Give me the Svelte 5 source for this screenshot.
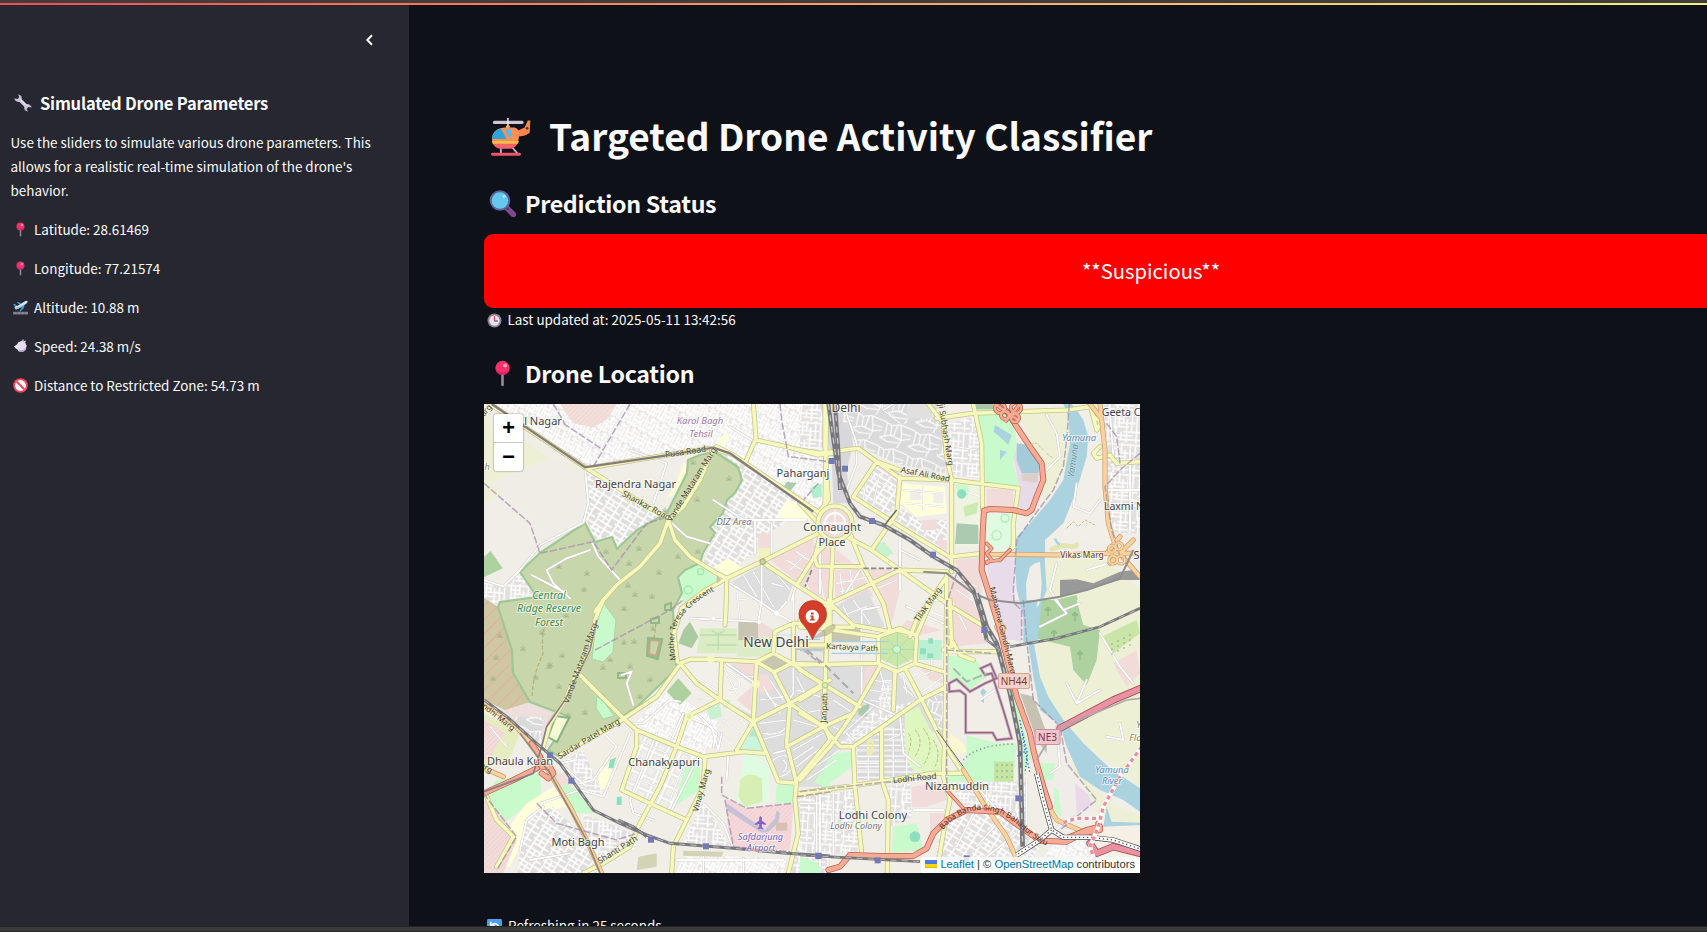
<script>
  const readings = [
    ['pin', 'Latitude: 28.61469'],
    ['pin', 'Longitude: 77.21574'],
    ['plane', 'Altitude: 10.88 m'],
    ['dash', 'Speed: 24.38 m/s'],
    ['ban', 'Distance to Restricted Zone: 54.73 m']
  ];

  // The map is drawn in sheets, each with its own origin and three units to a pixel.
  const sheets = {
    a: 'translate(470 340) scale(.33333)',
    b: 'translate(800 390) scale(.33333)',
    c: 'translate(470 600) scale(.33333)',
    d: 'translate(800 600) scale(.33333)',
    e: 'translate(640 520) scale(.33333)'
  };

  const areas = [
    ['a', 'url(#st1)', 'M42 192H1080V520L900 440 800 360 730 320 360 385 60 192Z'],
    ['a', '#f2dfdb', 'M270 192H440L410 240 370 262 310 250Z'],
    ['a', 'url(#hatch)', 'M270 192H440L410 240 370 262 310 250Z'],
    ['a', '#eef0d5', 'M42 200L75 300 150 310 210 350 130 395 160 430 42 490Z'],
    ['a', '#eef0d5', 'M160 300L230 350 340 385 345 400 250 355 130 400Z'],
    ['a', '#f0ede7', 'M130 400L250 350 350 400 350 540 215 610 180 530 60 430Z'],
    ['a', '#aed1a0', 'M42 650L62 633 98 685 42 712Z'],
    ['a', 'url(#st2)', 'M42 720L100 740 150 700 190 760 90 800 42 810Z'],
    ['a', 'url(#st3)', 'M345 395L430 440 540 510 590 520 500 570 440 628 425 590 375 600 350 540Z'],
    ['a', '#f2efe9', 'M610 460L640 340 690 340 650 400 600 470 570 465Z'],
    ['a', '#fffcd8', 'M615 440L640 370 660 370 625 465 590 470Z'],
    ['a', 'url(#st3)', 'M730 320L820 375 1030 515 960 540 860 600 850 640 770 700 700 670 735 580 720 560 770 480 815 420 805 380Z'],
    ['a', '#ffffe0', 'M745 300L770 275 780 300 760 320ZM955 475L1040 525 1030 545 920 535Z'],
    ['a', '#aacbb0', 'M950 425L980 430 955 460 935 450Z'],
    ['a', '#aef0cd', 'M1020 445L1055 430 1055 470 1030 475Z'],

    ['b', 'url(#st2)', 'M0 42H100V180H0Z'],
    ['b', '#d9d6dc', 'M60 42H130L160 160 140 240 150 340 100 340 95 200Z'],
    ['b', 'url(#st4)', 'M100 42H410L440 150 440 250 300 225 200 180 170 165Z'],
    ['b', '#f1dcda', 'M175 180L215 200 300 250 285 330 180 320 230 230Z'],
    ['b', 'url(#st3)', 'M170 320L230 230 290 270 285 360 250 370Z'],
    ['b', '#e2e0de', 'M340 42H385L400 85H320V55Z'],
    ['b', 'url(#st2)', 'M445 100L520 80 545 170 545 265 460 255Z'],
    ['b', '#ffffdc', 'M300 280L435 290 440 370 350 380 300 340Z'],
    ['b', '#f0ede8', 'M330 300L360 295 365 330 330 330ZM400 310H430V340H400Z'],
    ['b', 'url(#st3)', 'M290 340L360 390 440 390V480L290 390Z'],
    ['b', '#f1dcda', 'M365 390L410 388 410 420 365 420ZM410 450H440V490L420 480Z'],
    ['b', '#eef3e2', 'M465 280H545V470H465Z'],
    ['b', '#c8facc', 'M465 285L500 280 510 310 480 325Z'],
    ['b', '#cdebb0', 'M490 350L535 335 530 370 495 380Z'],
    ['b', '#aacbb0', 'M470 400L535 405V462H465Z'],
    ['b', '#c8facc', 'M525 42H600L640 100 650 150 640 220 660 290 555 280 550 150Z'],
    ['b', '#aac4a5', 'M525 42H580V58H530Z'],
    ['b', '#f1dcda', 'M560 295L640 300V350H560Z'],
    ['b', '#e8dbe8', 'M655 160L640 200 660 300 645 350 695 360 720 290V250Z'],
    ['b', '#a5cbd9', 'M650 160L690 165 720 210 715 250 665 250 650 210Z'],
    ['b', '#dccfc8', 'M668 250L715 250 712 278 665 272Z'],
    ['b', '#dffce2', 'M560 375L650 370V430L620 480 560 470Z'],
    ['b', '#eef0d5', 'M650 70H800L805 130 800 230 760 290 730 340 740 250 700 160Z'],
    ['b', '#e9dcea', 'M560 510L640 500 645 640 665 660V750H620L570 620Z'],
    ['b', '#f1dcda', 'M465 510L540 500 545 600 545 650 480 570ZM450 560L500 600 545 690V750H450Z'],
    ['b', '#f2efe9', 'M850 200H900L910 290 930 460 800 455 740 470 760 420 830 310Z'],
    ['b', 'url(#st2)', 'M910 42H1020V430L945 430 912 300Z'],
    ['b', '#eef0d5', 'M740 505H920L1020 600V900H715L730 640Z'],
    ['b', '#aed1a0', 'M725 640L830 615 850 700 780 720 710 750Z'],
    ['b', '#999', 'M780 570L830 568 880 580 960 545 1000 540 1020 570 960 570 860 600 780 620Z'],

    ['c', '#ddd', 'M770 195H1080V560H985L925 540 890 460 850 365 760 300Z'],
    ['c', '#aacba0', 'M650 60L685 105 665 150 625 170 615 130Z'],
    ['c', '#e5ecc0', 'M42 340L150 400 130 450 110 490 42 500Z'],
    ['c', '#f1dcda', 'M42 360L105 400 60 470 42 480Z'],
    ['c', 'url(#hatch)', 'M42 360L105 400 60 470 42 480Z'],
    ['c', '#eddfdb', 'M90 330L180 305 270 335 225 430 170 410Z'],
    ['c', 'url(#st4)', 'M130 350L220 350 215 430 160 400Z'],
    ['c', '#c8facc', 'M45 590L80 540 210 520 215 580 140 640 90 680Z'],
    ['c', '#ffffdc', 'M110 690L170 610 250 560 300 620 180 640 150 740 120 800H70Z'],
    ['c', '#f1dcda', 'M42 600L100 650 140 720 100 819H42Z'],
    ['c', 'url(#hatch)', 'M42 600L100 650 140 720 100 819H42Z'],
    ['c', '#f1dcda', 'M235 520L290 520 310 580 270 580Z'],
    ['c', 'url(#st3)', 'M170 650L250 620 330 700 390 819H140Z'],
    ['c', 'url(#st2)', 'M340 640L490 700 500 740 400 790 350 720Z'],
    ['c', '#c8facc', 'M280 550L320 570 370 640 320 640 270 580Z'],
    ['c', 'url(#st1)', 'M490 375L590 270 740 360 740 430 700 465 620 440Z'],
    ['c', 'url(#grid)', 'M510 400L610 445 540 600 465 570 500 440Z'],
    ['c', 'url(#grid)', 'M630 450L700 480 640 500 600 640 550 600Z'],
    ['c', '#c8facc', 'M645 500H690V570L610 620Z'],
    ['c', '#aed1a0', 'M590 275L625 235 665 280 630 315Z'],
    ['c', '#f3eee4', 'M280 480L440 390 490 390 440 580 330 560Z'],
    ['c', '#ffffdc', 'M385 520L430 480 420 560 390 570Z'],
    ['c', '#8edfc0', 'M420 480L438 472 430 505 415 505ZM440 590H455V615H440Z'],
    ['c', 'url(#st2)', 'M285 480L340 450 400 590 350 580Z'],
    ['c', 'url(#st2)', 'M700 600L780 740 640 730Z'],
    ['c', '#f5d8dc', 'M765 595L830 625 970 610 960 750 780 740Z'],
    ['c', 'url(#hatch)', 'M765 595L830 625 970 610 960 750 780 740Z'],
    ['c', '#c7c1d6', 'M770 610L800 630 885 690 915 655 920 630 930 640 925 670 890 700 870 695 770 630Z'],
    ['c', '#d9c0b4', 'M918 668H952V692H918Z'],
    ['c', '#c8facc', 'M1040 550L1080 500V570Z'],
    ['c', 'url(#st1)', 'M640 765L950 775 940 819H620Z'],
    ['c', '#d3d3b5', 'M640 752L760 755 755 770 640 768Z'],
    ['c', 'url(#st2)', 'M985 590H1080V819H965Z'],
    ['c', '#d3d3b5', 'M505 770L560 760 560 800 500 810Z'],

    ['d', '#ddd', 'M0 190H235L290 215 430 400 250 380 120 440 0 560Z'],
    ['d', '#bdf0d2', 'M355 120H425V180H355Z'],
    ['d', '#c8facc', 'M445 165L530 180 560 230 510 270 450 240Z'],
    ['d', 'url(#st2)', 'M250 240H275V320L350 300 300 350 170 430 120 430 230 320Z'],
    ['d', 'url(#st4)', 'M370 290L440 270V400L420 400Z'],
    ['d', '#def6c0', 'M315 340L355 320 440 480 420 525 340 510 315 480Z'],
    ['d', 'url(#st5)', 'M170 440L240 400 310 370 320 480 350 525 250 540H170Z'],
    ['d', '#c8facc', 'M40 550L100 460 155 455V500L90 550Z'],
    ['d', '#f1dcda', 'M448 10L520 40 560 130 455 140ZM335 560L430 545 440 600 380 620 335 620Z'],
    ['d', '#c8facc', 'M500 405L590 430 650 430 640 545H430L500 480Z'],
    ['d', '#fbf7d0', 'M450 400L490 430 500 460 450 460Z'],
    ['d', '#c5e5a5', 'M582 485H640V545H582Z'],
    ['d', 'url(#st2)', 'M445 550L680 545V700L600 635 500 625Z'],
    ['d', 'url(#st2)', 'M0 590L170 570 190 760H0Z'],
    ['d', 'url(#st2)', 'M250 560L330 550 335 650 270 680Z'],
    ['d', '#c8facc', 'M280 680L350 670 370 750 275 760ZM0 770L60 790V819H0Z'],
    ['d', '#f1dcda', 'M390 640L440 640 390 700Z'],
    ['d', 'url(#st3)', 'M420 690L500 640 600 645 720 740 660 819H400Z'],
    ['d', '#c8facc', 'M622 270L645 290 700 490 670 510 640 350Z'],
    ['d', '#c5c2b2', 'M660 280L700 290 740 400 740 460 710 420Z'],
    ['d', '#e9dcea', 'M620 0H665V130L625 110Z'],
    ['d', '#f0ede9', 'M680 480L770 480 880 600 890 620 780 690 740 620Z'],
    ['d', '#c8facc', 'M720 490L765 490 760 540 730 540ZM760 560L775 570 785 650 765 640Z'],
    ['d', '#ead9ea', 'M825 550L890 605 830 640Z'],
    ['d', '#eef0d5', 'M690 0H1020V560L890 460 800 390 730 260Z'],
    ['d', '#eef0d5', 'M780 430L840 520 920 600 1020 650V680L900 650Z'],
    ['d', '#aed1a0', 'M720 0H830L850 75 900 90 890 180 860 255 820 210 810 140 705 115Z'],
    ['d', '#c9e5a8', 'M905 110L1010 60 1020 100 940 160Z'],
    ['d', '#f1dcda', 'M940 190L1010 150 1020 220 980 260Z'],
    ['d', 'url(#st1)', 'M770 720L850 720 880 819H700Z'],
    ['d', '#f5efe5', 'M890 640L1020 690V819H880Z'],

    // central avenues and gardens
    ['e', '#f1eee8', 'M125 200L265 175 470 190 530 220 560 320 700 330 720 420 660 440 350 430 110 415 105 290Z'],
    ['e', '#c8facc', 'M120 160L160 120 185 130 240 185 130 250Z'],
    ['e', '#ffffd8', 'M225 140L265 115 315 150 262 172Z'],
    ['e', '#f1dcda', 'M355 40H395V85H355Z'],
    ['e', '#f2f2bf', 'M355 85H395V120L355 125Z'],
    ['e', '#dedede', 'M275 185L365 135 460 190 440 245 410 280 360 245Z'],
    ['e', '#f1dcda', 'M390 120L520 55 530 130 470 185ZM480 190L530 60 570 80 575 240 520 220ZM585 150L660 145 700 230 585 245ZM590 90L640 130 585 130ZM665 145L775 150 700 190ZM700 195L775 160 780 210 750 330Z'],
    ['e', '#ddd', 'M575 265L680 210 735 320 680 325Z'],
    ['e', '#ddd', 'M690 210L775 160 665 225Z'],
    ['e', '#c8f2cf', 'M700 70L735 65 760 100 725 120 700 90Z'],
    ['e', '#aacba0', 'M150 305L175 350 155 385 115 370 130 330Z'],
    ['e', '#d9ecc4', 'M180 325H290V400H170Z'],
    ['e', '#dcecc8', 'M290 350L400 350V410H290Z'],
    ['e', '#c8c5b3', 'M295 305H355V360H295Z'],
    ['e', '#eedcda', 'M355 300L400 330 400 350H355Z'],
    ['e', '#c8c5b3', 'M575 325H660V365H575ZM365 428L402 405 440 430 402 452Z'],
    ['e', '#c8c5b3', 'M460 385H555V430H465Z'],
    ['e', '#e8e6e0', 'M470 390H550V425H470Z'],
    ['e', '#cbe8a9', 'M718 355L770 332 825 362 822 415 770 440 718 415Z'],
    ['e', '#f1dcda', 'M675 445L725 430 700 490 665 530ZM800 300L905 330 825 350 780 325ZM840 440L910 460V490L870 480Z'],
    ['e', '#f3efe9', 'M120 430L235 430V540L150 490ZM250 430L345 500V590L250 540Z'],
    ['e', '#f1dcda', 'M270 430H345V480ZM290 540L335 500V575ZM350 460L385 465 400 510 355 520Z'],
    ['e', '#b0e8cc', 'M340 625L355 650H325Z'],
    ['e', '#c8f5dc', 'M325 650H355L370 690H300Z'],
    ['e', '#dffce2', 'M315 705L370 700 390 740 385 845 310 865 288 835Z'],
    ['e', '#d7efb4', 'M300 780Q330 750 365 775L368 845 315 860 295 830Z'],
    ['e', '#c8facc', 'M410 795H465V850H405Z'],
    ['e', '#aacbb0', 'M655 565L690 550 680 590 655 585Z'],
    ['e', '#c8f2cf', 'M200 560L240 550 245 590 210 600ZM250 540h20v25h-20z']
  ];

  const water = [
    ['b', 'M790 42L805 80 810 160 790 270 750 330 690 400 650 440 645 530 650 600 670 680V760H712L725 640 740 600 735 520V450L790 400 830 300 860 200 865 140 850 90 830 60 815 42ZM705 520L720 515 725 580 720 640 700 665 680 640 678 580 690 530Z'],
    ['d', 'M670 0L680 100 700 230 720 330 780 375 800 440 840 530 900 570 970 600 1020 635V565L930 505 850 430 790 360 745 290 720 230 700 120 712 0Z'],
    ['d', 'M920 620L910 680 1020 675V668L935 665Z'],
    ['b', 'M585 105L610 120 635 135 625 165 600 140 580 125ZM600 180L620 185 600 210Z'],
    ['d', 'M540 275l10-10 10 12-12 12zM540 300l12-5 0 15z']
  ];

  // kind: y secondary, o primary, t trunk, m motorway, w minor, f lane
  const roads = [
    ['f', 'e', 'M290 210L300 300M310 165L350 230M340 155L400 260M400 150L450 210M395 190L430 200M290 240L345 235M440 120L500 160M470 95L520 130M450 150L500 100M500 190L515 230M540 160L550 230M600 160L610 230M630 150L640 220M590 190L690 170M600 215L690 200M700 210L770 180M610 260L640 320M640 240L690 310M600 290L680 260M250 440L290 520M270 460Q330 500 270 510M300 470L340 470M360 540L430 530M370 500L420 580M390 480L430 540M380 520Q400 560 430 560M470 470L500 530M480 460L530 480M470 510L540 530M480 560L530 600M490 580L540 570M460 600L530 620M360 610L440 600M370 640Q420 650 440 620M360 660L440 640M250 600L300 640M240 640L290 690M300 600L330 620M460 690L550 640M460 720L520 680M400 720Q440 690 460 730 450 770 410 770 390 750 400 720M430 720Q450 740 430 755M480 770L600 690M500 780L590 720M470 740L560 670M580 540L640 580M590 520L660 560M580 620L620 640M600 600L650 600M640 660H720M650 690H720M650 710H720M650 730H720M650 750H720M740 660L790 640M740 690H790M740 720H790M610 640L700 560M620 660L720 600M820 480L900 440M840 520L910 470M870 500L890 540M720 450L750 570M700 480L750 490M690 510L750 520M690 540L750 550M790 500L820 530M790 470L800 520M860 240L880 280M850 270L910 290'],
    ['f', 'b', 'M240 20L250 60 300 100M180 240L260 290M200 260L190 330M240 250L220 340M310 300L430 310M320 340L430 350M370 290L370 360M460 560L530 590M470 600L530 640M460 640L500 720M470 170L530 180M480 300L540 320'],
    ['f', 'c', 'M60 380L110 440M640 230L700 260M660 220L740 270M690 300L740 320M520 430L590 460M500 480L570 510M490 530L560 560M650 470L600 600M860 470L900 500'],
    ['w', 'a', 'M345 385L355 490 340 548 210 615 150 690 100 740 42 720M365 605L385 650 450 720M360 630L290 655 230 690 250 730 300 775M185 705L290 760M600 545L650 590 720 610M855 540V640M820 540H1010M905 550V640M780 260L860 310M480 330L590 370 550 490M730 480L830 545'],
    ['w', 'e', 'M365 135V245L355 305 150 295M270 190L360 245 410 280 455 305M440 245L410 280M460 230V430M455 240L470 190M260 430L345 490M460 440V520L440 550M665 270V540L780 590 790 700 840 740M665 270L720 260M540 90V220M640 660L620 640M440 690L400 700M140 590L215 620 235 690 245 640M265 700L260 780M780 20V150M860 240L910 240'],
    ['w', 'b', 'M130 42L170 160M170 160V220L140 300M250 60L280 42M300 480V600M180 540L130 620M300 480L360 510M930 70L940 200M830 280L820 350 870 370 900 330M770 520L750 600 790 660M790 660L840 640M320 650L430 700M860 540L960 510M740 75L770 130 780 200 740 240M915 210H1020M920 300H1020M990 180V420'],
    ['w', 'c', 'M490 315L470 250 485 215 455 225M630 305L600 300 520 370 480 370M690 350L740 400 730 440M550 660L490 640 480 600 560 400M600 640L690 460M640 340L600 430M400 400L440 440 370 540 330 550M210 610L330 570 400 590 480 400M150 750L170 660 220 620M350 560L270 490 320 480M180 780L300 760M700 610L760 670 790 745M1050 600V800M620 780H940M700 770V819M820 775V819'],
    ['w', 'd', 'M395 180V215H435M0 610H60V560M100 560V770M50 590V760M340 630H430M450 560L540 570 600 640M680 540V700M560 560V620M600 660L530 740M520 640L470 740M650 700L560 770M900 100L960 200 1000 250M765 0L800 40 720 80M830 310L900 270M920 410L970 420 960 370M770 380L780 500 750 520M840 640L720 720M860 240L830 310 800 250M600 260L540 300'],

    ['y', 'a', 'M60 192L350 385 430 435 540 505 595 535M350 385L590 345 720 325 780 340M725 335L690 420 640 500 595 540M595 540L570 610 510 680 440 735 400 780 375 815M595 540L615 600 660 650 740 700 770 715M770 715L875 665 1045 580 1090 550M770 715L768 810 765 855M875 665L980 735 1090 805M980 735L1040 640 1080 600M850 192L858 295 825 370M858 300L950 320 1045 345 1090 340M1065 192V320L1075 480 1045 520M740 320L790 345 1050 520'],
    ['y', 'b', 'M520 42L545 160 548 360M410 85L520 70 800 60 870 50M0 180L60 190 175 175 230 215 300 240M175 175L300 265 455 270 655 295M385 42L430 100 440 200 455 270V500M655 295L640 400V470L600 510M455 500L550 490M300 260L290 370 215 480M230 215L160 320M160 320L300 410 455 505V545M80 42L75 340M140 440L215 480 300 540 440 545M150 430L190 530 250 640 270 720M100 450L90 640V760M0 690L90 640M42 500L52 528 190 530M300 540L90 640M300 540L440 640M440 560L350 690 330 740M90 640L160 705 270 725M270 725L300 715 345 735M0 710L160 712M55 400L0 340M870 42L880 80 905 95 890 120 880 80M900 170L880 190 890 205 930 195 950 220 1020 215M440 545V760M60 440L45 500'],
    ['y', 'c', 'M400 0L375 60 360 150 320 220 285 300 240 370 220 440M330 225L460 355 500 390 620 440 700 470 820 455 885 460M270 465L440 370 560 290 625 200M630 190L680 250 750 300 850 365M630 190L660 178 720 178 860 185 910 160 965 190 1080 195M755 185L750 300 650 350 620 440 570 560 510 670 480 740 400 790 340 819M500 390V440L455 570 540 610 650 660M705 470L700 560 650 660 610 740 605 819M860 185L850 365 890 460 925 545 980 550M850 365L960 310 1080 240M860 185L910 215 960 310 1060 380M850 365L800 450M965 190L915 215M965 190L1060 255M970 70V190M910 160L915 95 970 70 1080 75M960 310L950 430 980 550M950 440L1060 380M1065 380L1080 420 980 540 975 600 985 700 955 819M990 585L1080 570M50 590L80 660 130 710 80 800'],
    ['y', 'e', 'M260 175L190 215 125 265 102 340 112 425'],
    ['y', 'd', 'M0 80L60 85 235 110M0 135H75M0 195L235 190M345 190L430 215M350 105L395 0M235 110L290 90 350 105 345 190 290 215 235 190ZM0 300L75 255M75 255L85 0M75 255L180 320M0 210L75 255M90 440L160 340 240 200M0 340L70 380 120 440M70 380L160 340M120 440H160L240 385 360 300 440 260M285 210L280 330M315 205L365 300 430 430 490 520M75 255L70 380M90 440L0 540M160 440L165 560 185 760M245 385V540L265 600 262 819M440 -10L438 160 435 400 430 530 450 600 430 700 410 819M450 0L455 140 430 150 500 155 600 155M455 20L545 75M450 110L480 165 520 180M0 580L240 545 400 520 490 520'],
    ['o', 'b', 'M550 495L620 493 770 495 920 490H1020M900 42L915 180V290L925 400 950 480 1020 560M870 42L900 80M920 490L960 440M930 520L1000 450'],
    ['o', 'd', 'M490 510L550 610 620 710 660 800M740 610L770 660 860 700M590 80L600 70 612 85 600 100Z'],
    ['o', 'c', 'M42 310L130 370 200 450 240 520M240 520L300 620 350 720 395 819M42 505L100 530'],
    ['t', 'b', 'M600 42L625 70 650 110 690 170 725 220 730 270 710 320 695 360 680 370 640 360 570 357 552 362 548 430 545 540 570 620 600 720 615 780'],
    ['t', 'd', 'M612 140L625 190 650 290 690 400 700 450 710 490 730 560 750 620'],
    ['t', 'd', 'M85 810L120 800 150 765 240 768H340L380 745 400 700 440 660 500 630 600 635 660 680 720 722 800 725 850 700 900 690 895 670M800 715L860 690 900 680'],
    ['t', 'c', 'M42 580L130 540 200 505M185 430L210 470M215 500L240 500 250 520 235 535 215 520'],
    ['m', 'd', 'M1030 262L940 300 780 385M870 730L890 760 940 740 1020 760']
  ];
  const styles = {
    f: ['#cfcccb', 5, '#fff', 3.5],
    w: ['#c9c4c0', 8, '#fff', 5.5],
    y: ['#c3c68a', 15, '#f6f8bd', 10.5],
    o: ['#c79a66', 15, '#fad2a0', 11],
    t: ['#b8604c', 18, '#f7ab97', 13.5],
    m: ['#a8505e', 22, '#e892a2', 17]
  };

  const rails = [
    ['b', 'M85 42L100 150 115 250 150 340 180 380 250 405 330 450 400 500 470 540 520 600 545 680 560 750', 12],
    ['b', 'M105 42L115 180 120 300', 12],
    ['d', 'M530 -20L560 80 590 130 630 280 660 430 668 740', 14],
    ['d', 'M560 120L600 150M630 140L770 115 900 80 1020 25', 8],
    ['c', 'M42 300L110 350 200 430 270 490 320 560 370 630 450 670 530 705 600 730 790 745 950 760 1080 768', 9],
    ['c', 'M445 660L490 680 530 710', 8],
    ['d', 'M0 765L120 772 360 785', 8]
  ];

  const metro = [
    ['a', 'M65 192L345 382 590 346 730 323 780 340 830 375 1030 515', '#857b7e', 7],
    ['b', 'M370 545L440 550 520 610 570 630 660 640 780 620 860 600 960 565 1000 480', '#8f8f8f', 6],
    ['b', 'M250 410L290 360', '#666', 4],
    ['c', 'M380 60L360 150 285 300 230 380 215 440 190 520 42 575', '#8b7f86', 5],
    ['c', 'M150 400L240 520 350 720 390 819', '#93867a', 5],
    ['d', 'M1020 295L980 300 800 375 740 430 710 480', '#aaa', 5],
    ['d', 'M410 390L490 500', '#666', 3]
  ];

  const borders = [
    ['a', 'M480 192L440 260 370 380M280 250L400 330M42 430L180 550 210 640 370 605 425 690 530 550 595 530M930 192L935 240 955 350 1080 365M1045 430L1000 480M250 192L290 260'],
    ['b', 'M808 42L800 150 790 230 760 300 700 380 650 450 640 600 642 640 665 660V750M1020 190L960 240 915 290 935 420 960 500M470 550L440 640V750M920 100L950 140 960 220'],
    ['c', 'M375 150L600 30 640 0M200 610L260 670 440 720 500 700M755 530V585L830 625 970 610M765 600L790 740 960 755M980 590L1080 575M40 580L140 710 80 810'],
    ['d', 'M440 0V550M0 575L400 530M670 0L680 120 700 300 780 380 800 490 890 600 780 690M440 150L580 160M10 150L60 190']
  ];

  const stations = [[95,213,'b'],[135,236,'b'],[216,393,'b'],[399,494,'b'],[553,720,'b'],[543,719,'c'],[708,739,'c'],[1046,768,'c'],[240,466,'c'],[304,542,'c'],[55,767,'d'],[233,781,'d'],[655,595,'d'],[500,775,'d']];

  const tufts = [[693,464],[729,480],[697,501],[665,512],[727,509],[639,550],[629,565],[678,558],[698,553],[659,574],[559,568],[587,575],[606,553],[628,587],[635,596],[652,598],[584,591],[500,637],[523,650],[562,657],[550,666],[536,679],[559,688],[549,668],[493,680],[496,659],[610,661],[634,643],[630,668],[603,669],[640,698],[650,681],[603,698],[568,717],[585,714],[603,714],[624,644],[624,610],[566,617],[542,634],[653,630]];

  // text, x, y, size, rotation, colour, italic
  const labels = [
    ['l Nagar', 543, 425, 11, 0, '#444'],
    ['Karol Bagh', 700, 424, 9.5, 0, '#a07aa8', 1],
    ['Tehsil', 701, 437, 9.5, 0, '#a07aa8', 1],
    ['Rajendra Nagar', 635.500, 487.5, 11, 0, '#444'],
    ['Paharganj', 803, 476.5, 11, 0, '#444'],
    ['Delhi', 846, 412, 12, 0, '#444'],
    ['DIZ Area', 734, 525, 9.3, 0, '#777', 1],
    ['Connaught', 832, 531, 11, 0, '#444'],
    ['Place', 832, 545.5, 11, 0, '#444'],
    ['Central', 549, 598.5, 10.5, 0, '#3f8f4f', 1],
    ['Ridge Reserve', 549, 612, 10.500, 0, '#3f8f4f', 1],
    ['Forest', 549, 625.5, 10.500, 0, '#3f8f4f', 1],
    ['New Delhi', 776, 647, 13.700, 0, '#444'],
    ['Dhaula Kuan', 520, 765, 11, 0, '#444'],
    ['Chanakyapuri', 664, 766, 11, 0, '#444'],
    ['Moti Bagh', 578, 845.5, 11, 0, '#444'],
    ['Nizamuddin', 957, 789.5, 11.2, 0, '#444'],
    ['Lodhi Colony', 873, 819, 11.2, 0, '#444'],
    ['Lodhi Colony', 856, 829, 9, 0, '#777', 1],
    ['Safdarjung', 760.500, 839.5, 9.2, 0, '#7560b8', 1],
    ['Airport', 761, 850.5, 9.2, 0, '#7560b8', 1],
    ['Geeta C', 1121, 415.5, 10.500, 0, '#444'],
    ['Laxmi N', 1124, 509.5, 10.500, 0, '#444'],
    ['Sh', 1140, 559, 11, 0, '#444'],
    ['Yamuna', 1079, 440.5, 9.4, 0, '#5b8dc0', 1],
    ['Yamuna', 1076, 461, 9.2, -82, '#5b8dc0', 1],
    ['Yamuna', 1112, 773, 9.2, 0, '#5b8dc0', 1],
    ['River', 1112, 784, 9.2, 0, '#5b8dc0', 1],
    ['Ya', 1141, 728, 9.500, 0, '#8b8c52', 1],
    ['Floo', 1138, 741, 9.500, 0, '#8b8c52', 1],
    ['h', 487, 470, 9, 0, '#8b8c52', 1],
    ['Pusa Road', 686, 454.5, 8.4, -8, '#444'],
    ['Shankar Road', 645, 508, 8.2, 28, '#444'],
    ['Vande Mataram Marg', 694, 486, 8.4, -58, '#444'],
    ['Vande Mataram Marg', 583, 664, 8.3, -70, '#444'],
    ['Sardar Patel Marg', 590, 741, 8.400, -31, '#444'],
    ['Vinay Marg', 704, 791, 8.400, -74, '#444'],
    ['Shanti Path', 619, 852, 8.400, -32, '#444'],
    ['Janpath', 827, 708, 8.2, -87, '#444'],
    ['Kartavya Path', 852, 650, 8, 3, '#444'],
    ['Asaf Ali Road', 925, 477, 8.2, 11, '#444'],
    ['aji Subhash Marg', 943, 433, 8.2, 81, '#444'],
    ['Tilak Marg', 930, 606, 8.2, -54, '#444'],
    ['Vikas Marg', 1082, 558, 8.400, 0, '#553c20'],
    ['Mahatma Gandhi Marg', 1000, 631, 8.2, 76, '#553030'],
    ['Lodhi Road', 915, 781, 8.3, -6, '#444'],
    ['ndhi Marg', 497, 719, 8, 38, '#553c20'],
    ['arg', 488, 412, 8, -50, '#444'],
    ['arg', 485, 770, 8, 30, '#444']
  ];
</script>

{#snippet emoji(kind, size)}
  <svg class="emoji" width={size} height={size} viewBox="0 0 32 32" aria-hidden="true">
    {#if kind === 'pin'}
      <path d="M14.500 15h3v15q-1.500 2-3 0z" fill="#998ea4" />
      <circle cx="16" cy="9.500" r="8.500" fill="#f8316a" />
      <path d="M8 11a8.500 8.500 0 0 0 16 1q-8 6-16-1z" fill="#d3266c" />
      <circle cx="19" cy="6.500" r="2.500" fill="#ff9dba" />
    {:else if kind === 'wrench'}
      <path d="M8 8L24 24" stroke="#d9cfe4" stroke-width="6" />
      <path d="M.5 8a7.500 7.500 0 0 0 10 5.500A7.500 7.500 0 0 0 12.500 3L7 .5l2.500 5L6.500 9zM31.500 24a7.500 7.500 0 0 0-10-5.500A7.500 7.500 0 0 0 19.500 29l5.500 2.500-2.500-5 3-3.500z" fill="#cbbfd9" />
      <path d="M11 9l13 13" stroke="#eee6f4" stroke-width="1.500" />
    {:else if kind === 'plane'}
      <path d="M0 25h32v6H0z" fill="#777083" />
      <path d="M2 28h5m3 0h5m3 0h5m3 0h5" stroke="#b5afbd" stroke-width="1.300" />
      <path d="M8 5l5-1 9 7-5 2zM0 9l4-1 7 7-4 2zM20 12l5-3-2 9-7 6-3 1z" fill="#279fe0" />
      <path d="M3 15q12-5 20-11 6-4 8-2 1 3-3 6-12 9-21 12-3 0-4-5z" fill="#dfe7ef" />
      <path d="M4 17q12-3 24-10-9 10-22 13z" fill="#a9c0d2" />
    {:else if kind === 'dash'}
      <path d="M2 16l7-5q1-5 6-5 3-4 7-1 5 0 5 5 4 4 1 8 1 6-5 7-2 4-6 2-6 1-7-4-4-2-8-7z" fill="#e6deef" />
      <path d="M12 21q3 4 8 3 6-1 7-8 2 9-5 11-7 3-10-6z" fill="#b3a0cb" />
      <path d="M2 16h10M20 3l3-1m1 4l3-2" stroke="#eee7f5" stroke-width="2.500" />
    {:else if kind === 'ban'}
      <circle cx="16" cy="16" r="15.500" fill="#f8455c" />
      <circle cx="16" cy="16" r="11.500" fill="#fff" />
      <path d="M8 8l16 16" stroke="#f8455c" stroke-width="4" />
    {:else if kind === 'heli'}
      <path d="M20 12l7-3 2.500-5.500h2L31 13q-4 3-10 3z" fill="#ff8350" />
      <circle cx="29" cy="9.500" r="1" fill="#333" />
      <path d="M3.500 5h21.500" stroke="#cfc5d4" stroke-width="2.500" stroke-linecap="round" />
      <path d="M14 1.500v7" stroke="#eee5ee" stroke-width="1.200" />
      <path d="M12.500 7.500h3v2.500h-3z" fill="#f9b440" />
      <path d="M8.500 24v5M17 24l5 6" stroke="#bdaac6" stroke-width="1.500" />
      <path d="M1.500 17.500C2 12 6.500 9 12 9h7q4.500 1 3.500 8-.500 8-7 8H8.500q-7-1-7-7.500z" fill="#ff8f55" />
      <path d="M2 21h19.500q-2 4.500-6 4.500H8.500q-5-.500-6.500-4.500z" fill="#f4626b" />
      <path d="M1.500 19.500h21l-.700 2.200H2z" fill="#f9bd45" />
      <path d="M1.500 18q0-6.500 7-8.500l4.500 8.500z" fill="#2aa5dc" />
      <path d="M12 10.500h4.500v6.500h-1.500z" fill="#55b9e8" />
      <path d="M2 29.800h21" stroke="#f05468" stroke-width="2.300" stroke-linecap="round" />
    {:else if kind === 'lens'}
      <path d="M21 21l8 8" stroke="#81478f" stroke-width="6.500" stroke-linecap="round" />
      <path d="M18 18l5 5" stroke="#533566" stroke-width="3" />
      <circle cx="13" cy="12.500" r="11" fill="#65c9ed" stroke="#5a659e" stroke-width="2.300" />
      <circle cx="18" cy="7.500" r="2" fill="#ace9fb" />
    {:else if kind === 'clock'}
      <circle cx="16" cy="16" r="15" fill="#8a8190" />
      <circle cx="16" cy="16" r="11" fill="#e6e0ea" />
      <path d="M16 7v10" stroke="#dd3d69" stroke-width="2.500" />
      <path d="M16 17h7" stroke="#554b5d" stroke-width="2.500" />
    {:else if kind === 'refresh'}
      <rect x="0" y="0" width="32" height="32" rx="3" fill="#4d9cf0" />
      <path d="M8 6v9h9M9 14q7-8 14-1 3 9-7 12" fill="none" stroke="#fff" stroke-width="3.500" />
    {/if}
  </svg>
{/snippet}

<div class="screen">
  <div class="frame-top"></div>
  <div class="decoration"></div>
  <div class="body">
    <aside>
      <div class="collapse">
        <svg width="9" height="12" viewBox="0 0 9 12"><path d="M7 1.300L2.300 6 7 10.700" fill="none" stroke="#fafafa" stroke-width="2" /></svg>
      </div>
      <h3>{@render emoji('wrench', 18)}<span>Simulated Drone Parameters</span></h3>
      <p class="intro">Use the sliders to simulate various drone parameters. This<br />allows for a realistic real-time simulation of the drone's<br />behavior.</p>
      {#each readings as [kind, text]}
        <p class="reading">{@render emoji(kind, 15)}<span>{text}</span></p>
      {/each}
    </aside>

    <main>
      <h1>{@render emoji('heli', 41)}<span>Targeted Drone Activity Classifier</span></h1>
      <h2>{@render emoji('lens', 27)}<span>Prediction Status</span></h2>
      <div class="status">**Suspicious**</div>
      <p class="updated">{@render emoji('clock', 15)}<span>Last updated at: 2025-05-11 13:42:56</span></p>
      <h2 class="location">{@render emoji('pin', 27)}<span>Drone Location</span></h2>

      <div class="map">
        <svg class="tiles" width="656" height="469" viewBox="484 404 656 469">
          <defs>
            <pattern id="st1" width="54" height="36" patternUnits="userSpaceOnUse" patternTransform="rotate(-62)">
              <rect width="54" height="36" fill="#ebe9e7" />
              <path d="M0 5H54M0 14H30M12 22H54M0 31H40M6 0V36M22 5V31M34 0V22M46 14V36" stroke="#fff" stroke-width="5" fill="none" />
              <path d="M27 14v8M0 26h6M46 8h8" stroke="#d3d0d0" stroke-width="2" />
            </pattern>
            <pattern id="st2" width="86" height="90" patternUnits="userSpaceOnUse" patternTransform="rotate(4)">
              <rect width="86" height="90" fill="#e2e0df" />
              <path d="M0 6H86M0 19H28M10 31H66M0 43H46M30 57H86M0 68H60M14 80H86M4 0V50M16 6V43M29 0V31M40 19V90M55 0V57M70 6V90M8 43V90M24 57V80" stroke="#fff" stroke-width="4.500" fill="none" />
            </pattern>
            <pattern id="st3" width="60" height="44" patternUnits="userSpaceOnUse" patternTransform="rotate(32)">
              <rect width="60" height="44" fill="#dfdedd" />
              <path d="M0 5H60M0 18H38M12 32H60M8 0V44M25 5V32M42 0V44" stroke="#fff" stroke-width="5" fill="none" />
            </pattern>
            <pattern id="st4" width="90" height="76" patternUnits="userSpaceOnUse" patternTransform="rotate(18)">
              <rect width="90" height="76" fill="#dadada" />
              <path d="M0 10L25 16 50 6 90 10M25 16L30 45 0 60M30 45L65 50 90 38M50 6L60 30 65 50 60 76M0 60L28 66 60 60M42 8L40 46M10 12L14 54M60 30H90" stroke="#fff" stroke-width="3.500" fill="none" />
            </pattern>
            <pattern id="st5" width="75" height="16" patternUnits="userSpaceOnUse">
              <rect width="75" height="16" fill="#d9d8d8" />
              <path d="M0 4H75M20 0V16M55 0V16" stroke="#fff" stroke-width="3.500" fill="none" />
            </pattern>
            <pattern id="grid" width="38" height="38" patternUnits="userSpaceOnUse" patternTransform="rotate(24)">
              <rect width="38" height="38" fill="#e9e7e3" />
              <path d="M0 3H38M3 0V38" stroke="#fff" stroke-width="5" />
              <rect x="11" y="11" width="20" height="20" fill="#f1efea" />
            </pattern>
            <pattern id="hatch" width="10" height="10" patternUnits="userSpaceOnUse" patternTransform="rotate(45)">
              <path d="M0 0V10" stroke="#ee9a94" stroke-width="1.600" opacity=".6" />
            </pattern>
            <path id="seru" d="M943 830Q952 818 966 812.500T1000 813.500Q1012 819 1022 829L1040 843 1060 850" />
            <path id="crescent" d="M676 660Q671 638 678 622 688 606 710 593L730 583" />
          </defs>
          <rect x="484" y="404" width="656" height="469" fill="#f1eee8" />
          {#each areas as [sheet, fill, d]}
            <path transform={sheets[sheet]} {fill} {d} />
          {/each}
          {#each water as [sheet, d]}
            <path transform={sheets[sheet]} fill="#aad3df" fill-rule="evenodd" {d} />
          {/each}

          <path d="M484 598L497 606 512 650 513 673 530 702 505 710 484 700Z" fill="#cfc6a2" />
          <path d="M484 598L497 606 512 650 513 673 530 702 505 710 484 700Z" fill="url(#hatch)" />
          <path d="M585 523L595 542 612 537 617 549 637 530 667 513 687 473 688 460 700 455 713 452 720 455 738 467 742 480 735 493 727 500 723 513 710 527 715 533 703 553 700 563 685 570 678 577 682 593 673 610 675 660 677 668 637 707 560 757 548 750 570 717 530 702 513 673 512 650 498 607 500 602 537 597 520 572 540 553Z" fill="#c8d7ab" stroke="#9fc795" stroke-width="2.200" stroke-linejoin="round" />
          <g stroke="#9fae88" stroke-width=".8" fill="none">
            {#each tufts as [x, y]}
              <path d="M{x - 3} {y}h6M{x - 2.5} {y - 3}l2.500 3 2.500-3M{x} {y - 4.5}v4.500" />
            {/each}
          </g>
          <path d="M603 602L616 620 613 652 603 662 592 659 595 630ZM597 696L605 703 614 716 603 719 596 708Z" fill="#c8facc" stroke="#a5d8a5" />
          <path d="M556 716L569 718 557 742 548 737Z" fill="#f5f9d5" stroke="#84b580" stroke-width="2" />
          <path d="M649 639L661 640 657 658 648 655Z" fill="#c8d7ab" stroke="#92b985" stroke-width="4" />
          <path d="M650 640L660 641 656 656 649 654Z" fill="#c8d7ab" stroke="#c1a98a" stroke-width="2" />
          <path d="M618 673h8v5h-8zM665 605l6-2v7h-6zM651 619l8-2v6h-8z" fill="#c8d7ab" stroke="#92b985" stroke-width="2" />
          <path d="M546 622q-5 15-3 32-10 20-11 43M656 623l-2 16" fill="none" stroke="#b4a468" stroke-dasharray="4 2" />

          <g fill="none" stroke-linejoin="round" stroke-linecap="round">
            {#each ['f', 'w', 'y', 'o', 't', 'm'] as kind}
              {#each roads.filter((r) => r[0] === kind) as [, sheet, d]}
                <path transform={sheets[sheet]} {d} stroke={styles[kind][0]} stroke-width={styles[kind][1]} />
              {/each}
              {#each roads.filter((r) => r[0] === kind) as [, sheet, d]}
                <path transform={sheets[sheet]} {d} stroke={styles[kind][2]} stroke-width={styles[kind][3]} />
              {/each}
            {/each}
            <path transform={sheets.d} d="M440 570L490 625" stroke="#b8604c" stroke-width="11" />
            <path transform={sheets.d} d="M440 570L490 625" stroke="#f7ab97" stroke-width="7" />
            <path transform={sheets.b} d="M560 460L575 475 560 490 575 510 560 520M560 515L600 510 630 480" stroke="#b8604c" stroke-width="11" />
            <path transform={sheets.b} d="M560 460L575 475 560 490 575 510 560 520M560 515L600 510 630 480" stroke="#f7ab97" stroke-width="7" />
          </g>

          <g fill="none">
            {#each borders as [sheet, d]}
              <path transform={sheets[sheet]} {d} stroke="#a68daa" stroke-width="4.500" stroke-dasharray="22 6" opacity=".75" />
            {/each}
            {#each metro as [sheet, d, color, w]}
              <path transform={sheets[sheet]} {d} stroke={color} stroke-width={w} />
            {/each}
            {#each rails as [sheet, d, w]}
              <path transform={sheets[sheet]} {d} stroke="#77777a" stroke-width={w} />
              <path transform={sheets[sheet]} {d} stroke="#c9c9c9" stroke-width={w * 0.3} stroke-dasharray="18 16" />
            {/each}
            <circle cx="835" cy="523" r="17" fill="#eeddd8" stroke="#c3c68a" stroke-width="5" />
            <circle cx="835" cy="523" r="17" stroke="#f6f8bd" stroke-width="3.500" />
            <circle cx="835" cy="523" r="10" stroke="#fff" stroke-width="2" />
            <path d="M835 510v26M822 523h26" stroke="#fff" />
            <g stroke="#b8604c" stroke-width="4">
              <circle cx="1000" cy="408" r="5" /><circle cx="1016" cy="408" r="5" /><circle cx="1005" cy="415" r="4" /><circle cx="1015" cy="418" r="4" /><path d="M995 404l23 16M1020 404l-15 18" />
            </g>
            <g stroke="#f7ab97" stroke-width="2.500">
              <circle cx="1000" cy="408" r="5" /><circle cx="1016" cy="408" r="5" /><circle cx="1005" cy="415" r="4" /><circle cx="1015" cy="418" r="4" /><path d="M995 404l23 16M1020 404l-15 18" />
            </g>
            <g stroke="#c79a66" stroke-width="3">
              <circle cx="1112" cy="549" r="3.500" /><circle cx="1119" cy="546" r="3.500" /><circle cx="1113" cy="560" r="4" /><circle cx="1121" cy="560" r="4" />
            </g>
            <g stroke="#fad2a0" stroke-width="2">
              <circle cx="1112" cy="549" r="3.500" /><circle cx="1119" cy="546" r="3.500" /><circle cx="1113" cy="560" r="4" /><circle cx="1121" cy="560" r="4" />
            </g>
            <path transform={sheets.d} d="M448 275L447 250 470 238 510 275 555 250 590 235 572 192 542 205 555 225 575 220 610 330 635 415 590 420 578 398H497V285L480 272Z" stroke="#c9abc0" stroke-width="9" />
            <path transform={sheets.d} d="M448 275L447 250 470 238 510 275 555 250 590 235 572 192 542 205 555 225 575 220 610 330 635 415 590 420 578 398H497V285L480 272Z" stroke="#92657f" stroke-width="4" />
            <path transform={sheets.d} d="M460 205L500 245 560 220" stroke="#a9b9a9" stroke-width="6" stroke-dasharray="30 8" />
            <g transform={sheets.d}>
              <path d="M710 520L730 600 755 690 790 712H870L940 720 1030 750M755 690L720 720 650 765" stroke="#444" stroke-width="16" />
              <path d="M710 520L730 600 755 690 790 712H870L940 720 1030 750M755 690L720 720 650 765" stroke="#fff" stroke-width="12" />
              <path d="M710 520L730 600 755 690 790 712H870L940 720 1030 750M755 690L720 720 650 765" stroke="#555" stroke-width="4" stroke-dasharray="4 8" />
              <path d="M1025 440L960 530 910 620 895 680 870 740 890 800M790 668L830 655 900 655" stroke="#fff" stroke-width="12" />
              <path d="M1025 440L960 530 910 620 895 680 870 740 890 800M790 668L830 655 900 655" stroke="#e88f9f" stroke-width="10" stroke-dasharray="12 10" />
              <path d="M490 480Q530 435 640 432" stroke="#9a9a9a" stroke-width="5" stroke-dasharray="4 8" />
              <path d="M660 360L675 450 690 520M668 400L682 460 675 520M674 455L650 470" stroke="#3455e8" stroke-width="4" stroke-dasharray="4 7" />
              <path d="M325 400q15 15 0 60M345 390q30 30 0 80M370 385q40 50 0 110M400 420q25 40 5 80" stroke="#c7b978" stroke-width="3" stroke-dasharray="10 5" />
              <path d="M292 100V205M240 148H345M260 115L325 185M325 115L260 185" stroke="#a9dcc0" stroke-width="3" />
              <circle cx="290" cy="148" r="12" fill="#c8facc" stroke="#a5cda2" stroke-width="3" />
              <path d="M95 125H265M95 160H265M0 118H60M0 152H70" stroke="#a7cfe2" stroke-width="4" />
              <circle cx="75" cy="256" r="8" fill="#c8facc" stroke="#c3c68a" stroke-width="4" />
              <circle cx="345" cy="710" r="16" fill="#8edfc0" />
              <path d="M360 145h18v18h-18zM385 115h14v16h-14zM382 160h18v14h-18z" fill="#8edfc0" />
              <path d="M205 425q12-5 14 8l-6 28q-10 3-8-10z" stroke="#f0efa0" stroke-width="7" />
            </g>
            <g transform={sheets.e}>
              <path d="M500 390L560 440 640 520" stroke="#aaa" stroke-width="6" stroke-dasharray="24 12" />
              <path d="M515 150L495 200M670 145H775" stroke="#888" stroke-width="5" stroke-dasharray="16 7" />
              <circle cx="368" cy="125" r="8" fill="#c8d7ab" stroke="#b3b57c" stroke-width="4" />
              <circle cx="145" cy="210" r="12" stroke="#a4e9ae" stroke-width="4" />
              <circle cx="182" cy="155" r="9" stroke="#a4e9ae" stroke-width="4" />
              <circle cx="220" cy="295" r="7" fill="#fff" stroke="#c9c4c0" />
              <circle cx="358" cy="306" r="7" fill="#fff" stroke="#c9c4c0" />
              <circle cx="410" cy="280" r="9" fill="#fff" stroke="#c9c4c0" />
              <circle cx="212" cy="417" r="11" fill="#f6f8bd" />
              <circle cx="348" cy="492" r="12" fill="#f6f8bd" />
              <circle cx="148" cy="590" r="10" fill="#d9eab0" stroke="#f6f8bd" stroke-width="6" />
              <path d="M230 165l14 14-14 12z" fill="#c8c5a0" />
              <path d="M180 345h110M200 375h90M235 335v55M215 330l20 15 20-15" stroke="#bfdcab" stroke-width="4" />
              <path d="M400 345h70M400 375h60" stroke="#cbe2ee" stroke-width="3" />
            </g>
            <g transform={sheets.b}>
              <circle cx="485" cy="312" r="14" fill="#8edfc0" />
              <circle cx="615" cy="385" r="12" stroke="#b1ecb6" stroke-width="4" />
              <circle cx="590" cy="436" r="14" stroke="#b1ecb6" stroke-width="4" />
              <path d="M800 415l20-20 15 15 20-20 30 15M680 165l30-5 25 25M740 190l20 15" stroke="#cbb57a" stroke-width="3" stroke-dasharray="8 5" />
              <path d="M755 478q30-15 50-10t25-5" stroke="#e3e5b0" stroke-width="14" stroke-linecap="round" />
              <path d="M765 445q5 15 15 18" stroke="#aad3df" stroke-width="8" />
            </g>
            <g stroke="#84b37a" stroke-width="1">
              <path d="M1048 608v8m-3-6q3-5 6 0zM1075 613v8m-3-6q3-5 6 0zM1054 631v8m-3-6q3-5 6 0zM1080 652v8m-3-6q3-5 6 0z" />
            </g>
            <g fill="#8b9f76">
              {#each [0, 1, 2, 3, 4, 5, 6, 7, 8, 9, 10, 11] as i}
                <circle cx={997 + (i % 4) * 5} cy={765 + Math.floor(i / 4) * 6} r=".8" />
                <circle cx={1112 + (i % 4) * 6} cy={644 - (i % 4) * 3 + Math.floor(i / 4) * 5} r=".8" />
              {/each}
            </g>
          </g>

          {#each stations as [x, y, sheet]}
            <rect transform={sheets[sheet]} x={x - 9} y={y - 9} width="18" height="18" fill="#7379b5" />
          {/each}

          <path d="M760.500 816l1.300 1.500v3l4 3v1.500l-4-1v3l1.500 1.200v1l-2.800-.6-2.800.6v-1l1.500-1.200v-3l-4 1v-1.500l4-3v-3z" fill="#8461c4" />

          <g class="labels" text-anchor="middle">
            {#each labels as [text, x, y, size, turn, color, italic]}
              <text transform="translate({x} {y}) rotate({turn})" font-size={size} fill={color} font-style={italic ? 'italic' : 'normal'} class:road={turn !== 0}>{text}</text>
            {/each}
          </g>
          <text class="curve" font-size="7.900"><textPath href="#seru">Baba Banda Singh Bahadur Seru</textPath></text>
          <text class="curve dark" font-size="7.800"><textPath href="#crescent">Mother Teresa Crescent</textPath></text>
          <g class="shield" text-anchor="middle">
            <rect x="998.500" y="673.500" width="31" height="15" rx="1.500" fill="#f5d2c8" stroke="#dba392" />
            <text x="1014" y="685" font-size="10" fill="#7c3c30">NH44</text>
            <rect x="1035" y="729.500" width="25" height="15" rx="1.500" fill="#f0c5cd" stroke="#cf8da0" />
            <text x="1047.500" y="741" font-size="10" fill="#7d3349">NE3</text>
          </g>

          <path d="M812 639l15-12q7-5 9-1-1 6-10 10z" fill="#333" opacity=".22" />
          <path d="M812.500 639.500Q808 629 802 623A13.800 13.800 0 1 1 823.500 623Q817 629 812.500 639.500Z" fill="#d33d2a" stroke="#b83324" stroke-width=".7" />
          <circle cx="812.300" cy="616.500" r="6.700" fill="#fff" />
          <path d="M811 612.500h2.600v1.900H811zM810.300 615.500h3.300v3.800h1.200v1.300h-4.800v-1.300h1.300v-2.500h-1z" fill="#d33d2a" />
        </svg>
        <div class="zoom"><span>+</span><span>−</span></div>
        <div class="credit">
          <svg width="12" height="8" viewBox="0 0 12 8"><path fill="#4c7be1" d="M0 0h12v4H0z" /><path fill="#ffd500" d="M0 4h12v3H0z" /><path fill="#e0bc00" d="M0 7h12v1H0z" /></svg>
          <a>Leaflet</a> | © <a>OpenStreetMap</a> contributors
        </div>
      </div>
      <p class="refresh">{@render emoji('refresh', 15)}<span>Refreshing in 25 seconds...</span></p>
    </main>
  </div>
  <div class="frame-bottom"></div>
</div>

<style>
  :global(body) { background: #0e1117; overflow: hidden; }
  .screen {
    width: 1707px; height: 932px; overflow: hidden; display: flex; flex-direction: column;
    font-family: "Noto Sans CJK SC", "Noto Sans", sans-serif; color: #fafafa;
    font-size: 13.430px; line-height: 24px; box-sizing: border-box;
  }
  .frame-top { height: 3px; background: #3e3e3e; flex: none; }
  .decoration { height: 2px; background: linear-gradient(90deg, #ff4b4b, #fffd80); background-size: 1830px 2px; flex: none; }
  .body { display: flex; height: 921px; overflow: hidden; flex: none; }
  .frame-bottom { height: 6px; background: #3a3a3b; border-top: 1px solid #222325; border-bottom: 1px solid #28292b; box-sizing: border-box; flex: none; }
  aside { width: 409px; background: #262730; flex: none; padding: 0 10px; box-sizing: border-box; }
  .collapse { height: 70px; padding: 0 25px 0 0; display: flex; justify-content: flex-end; align-items: center; }
  h1, h2, h3, p { margin: 0; display: flex; align-items: center; }
  span { white-space: pre; }
  .emoji { flex: none; display: block; }
  h3 { height: 24px; margin-top: 16px; padding-left: 4px; gap: 8px; font-size: 16.500px; font-weight: 600; letter-spacing: -.2px; }
  .intro { display: block; margin-top: 15px; padding-left: .5px; white-space: nowrap; }
  .reading { height: 24px; margin-top: 15px; padding-left: 3px; gap: 6px; }
  main { width: 1334px; flex: none; padding: 105px 0 0 75px; }
  h1 { height: 54px; font-size: 37px; font-weight: 700; gap: 18px; line-height: 54px; padding-left: 6px; }
  h1 span { margin-top: -4px; }
  h1 .emoji { margin-top: -2px; }
  h2 { height: 32px; font-size: 23.200px; font-weight: 600; letter-spacing: -.300px; gap: 9px; line-height: 32px; padding-left: 5px; margin-top: 24px; }
  h2 span { margin-top: -2px; }
  h2 .emoji { margin-top: -1px; }
  .status { height: 74px; line-height: 73px; margin-top: 14px; background: red; border-radius: 9px; text-align: center; font-size: 20.200px; color: #fff; }
  .updated { height: 24px; padding-left: 3px; gap: 5.5px; }
  .updated span, .refresh span { margin-top: -2px; }
  h2.location { margin-top: 26px; }
  .map { position: relative; width: 656px; height: 469px; margin-top: 14px; overflow: hidden; }
  .tiles { display: block; }
  .labels, .curve, .shield { font-family: "Noto Sans", sans-serif; }
  .labels text { paint-order: stroke; stroke: rgba(255, 255, 255, .65); stroke-width: 2px; stroke-linejoin: round; }
  .labels text.road { stroke: rgba(246, 248, 189, .5); stroke-width: 1px; }
  .curve { fill: #5b2a20; }
  .curve.dark { fill: #444; }
  .zoom {
    position: absolute; left: 10px; top: 10px; width: 29px; height: 57px; background: #fff; border-radius: 3px;
    box-shadow: 0 0 1px 1px rgba(0, 0, 0, .18); display: flex; flex-direction: column;
    font: bold 22px/28px "Liberation Mono", monospace; color: #000; text-align: center;
  }
  .zoom span { height: 28px; padding-top: 2px; line-height: 27px; box-sizing: border-box; }
  .zoom span:first-child { border-bottom: 1px solid #ccc; height: 29px; }
  .credit {
    position: absolute; right: 0; bottom: 0; height: 16px; padding: 0 5px 0 4px; background: rgba(255, 255, 255, .8);
    font: 11.200px/15px "Liberation Sans", sans-serif; color: #333; white-space: nowrap;
  }
  .credit a { color: #0078a8; }
  .refresh { height: 24px; margin-top: 41px; padding-left: 3px; gap: 6px; }
</style>
